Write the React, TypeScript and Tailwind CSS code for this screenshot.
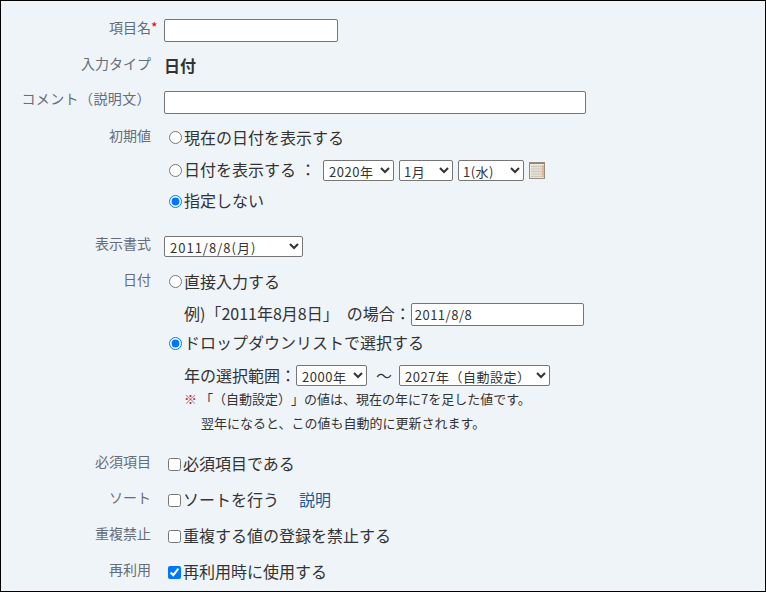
import React from "react";

const font = { fontFamily: '"Noto Sans CJK JP", "Noto Sans", sans-serif' };

function Row({ label, req, h, labelPt, children }: { label: string; req?: boolean; h: string; labelPt: string; children: React.ReactNode }) {
  return (
    <div className={`flex ${h}`}>
      <div className={`w-[150px] shrink-0 text-right text-[14px] leading-[14px] text-[#666d78] ${labelPt}`}>
        {label}
        {req && <span className="absolute text-[#e00000]">*</span>}
      </div>
      <div className="ml-[13px] flex-1 min-w-0">{children}</div>
    </div>
  );
}

function Radio({ checked }: { checked?: boolean }) {
  return <input type="radio" readOnly checked={!!checked} name="" className="m-0 ml-[5px] mr-[2px] h-[13px] w-[13px] shrink-0" />;
}
function Check({ checked }: { checked?: boolean }) {
  return <input type="checkbox" readOnly checked={!!checked} className="m-0 ml-[4px] mr-[2px] h-[13px] w-[13px] shrink-0" />;
}

const selectCls =
  "h-[21px] rounded-[2px] border border-[#767676] bg-white text-[13px] leading-[17px] text-[#333] appearance-auto";

export default function App() {
  return (
    <div style={font} className="h-[592px] w-[766px] overflow-hidden border border-black bg-[#eff4f8] text-[16px] text-[#333] [text-spacing-trim:space-all]">
      <div className="pt-[18px]">
        <Row label="項目名" req h="h-[36px]" labelPt="pt-[1px]">
          <input className="block h-[23px] w-[174px] rounded-[2px] border border-[#767676] bg-white" />
        </Row>
        <Row label="入力タイプ" h="h-[36px]" labelPt="pt-[1px]">
          <div className="text-[16px] font-bold leading-[20px]">日付</div>
        </Row>
        <Row label="コメント（説明文）" h="h-[37px]" labelPt="tracking-[0.4px]">
          <input className="block h-[23px] w-[422px] rounded-[2px] border border-[#767676] bg-white" />
        </Row>
        <Row label="初期値" h="h-[108px]" labelPt="">
          <div className="flex h-[27px] items-center pb-[8px]">
            <Radio />
            <span className="pb-[2px] leading-[20px]">現在の日付を表示する</span>
          </div>
          <div className="flex h-[30px] items-center">
            <Radio />
            <span className="pb-[2px] leading-[24px]">日付を表示する</span>
            <span className="ml-[4px] w-[23px] pb-[2px] leading-[24px]">：</span>
            <select className={`${selectCls} w-[71px] pl-[1px] tracking-[0.5px]`}><option>2020年</option></select>
            <select className={`${selectCls} ml-[5px] w-[54px] tracking-[0.5px]`}><option>1月</option></select>
            <select className={`${selectCls} ml-[5px] w-[66px] tracking-[0.5px]`}><option>1(水)</option></select>
            <svg className="ml-[5px]" width="16" height="17" viewBox="0 0 16 17">
              <rect x="0.5" y="0.5" width="15" height="16" fill="#eee8dc" stroke="#938e80" />
              <rect x="1" y="1" width="14" height="1" fill="#d9694c" />
              <path d="M2 4.5h12M2 7h12M2 9.5h12M2 12h12M2 14.5h12" stroke="#c9c3b4" />
              <path d="M4.5 3v12M7 3v12M9.5 3v12M12 3v12" stroke="#d6d1c4" />
              <path d="M14 3v12" stroke="#e08a5c" />
            </svg>
          </div>
          <div className="flex h-[32px] items-center">
            <Radio checked />
            <span className="pb-[2px] leading-[24px]">指定しない</span>
          </div>
        </Row>
        <Row label="表示書式" h="h-[36px]" labelPt="">
          <select className={`${selectCls} block w-[139px] pl-[1px] tracking-[1px]`}><option>2011/8/8(月)</option></select>
        </Row>
        <Row label="日付" h="h-[182px]" labelPt="">
          <div className="flex h-[31px] items-center pb-[12px]">
            <Radio />
            <span className="pb-[2px] leading-[20px]">直接入力する</span>
          </div>
          <div className="ml-[20px] flex h-[23px] items-center">
            <span className="pb-[2px] leading-[23px]">例)「2011年8月8日」<span className="ml-[8px]">の場合：</span></span>
            <input readOnly value="2011/8/8" className="h-[23px] w-[173px] rounded-[2px] border border-[#767676] bg-white px-[3px] text-[13px] tracking-[0.5px] text-[#333]" />
          </div>
          <div className="flex h-[34px] items-center">
            <Radio checked />
            <span className="pb-[2px] leading-[24px]">ドロップダウンリストで選択する</span>
          </div>
          <div className="ml-[20px] flex h-[31px] items-center">
            <span className="pb-[2px] leading-[24px]">年の選択範囲：</span>
            <select className={`${selectCls} w-[71px] pl-[1px] tracking-[0.5px]`}><option>2000年</option></select>
            <span className="ml-[9px] w-[23px] pb-[2px] leading-[24px]">～</span>
            <select className={`${selectCls} w-[151px] pl-[1px] tracking-[0.5px]`}><option>2027年（自動設定）</option></select>
          </div>
          <div className="-mt-[4px] ml-[20px] text-[13px] leading-[24px]">
            <div><span className="text-[#b03050]">※</span> 「（自動設定）」の値は、現在の年に7を足した値です。</div>
            <div className="pl-[17px]">翌年になると、この値も自動的に更新されます。</div>
          </div>
        </Row>
        <Row label="必須項目" h="h-[36px]" labelPt="">
          <div className="flex h-[20px] items-center"><Check /><span className="pb-[2px] leading-[20px]">必須項目である</span></div>
        </Row>
        <Row label="ソート" h="h-[36px]" labelPt="">
          <div className="flex h-[20px] items-center"><Check /><span className="pb-[2px] leading-[20px]">ソートを行う</span><a className="ml-[20px] pb-[2px] leading-[20px] text-[#1a5a96]">説明</a></div>
        </Row>
        <Row label="重複禁止" h="h-[36px]" labelPt="">
          <div className="flex h-[20px] items-center"><Check /><span className="pb-[2px] leading-[20px]">重複する値の登録を禁止する</span></div>
        </Row>
        <Row label="再利用" h="h-[24px]" labelPt="">
          <div className="flex h-[20px] items-center"><Check checked /><span className="pb-[2px] leading-[20px]">再利用時に使用する</span></div>
        </Row>
      </div>
    </div>
  );
}
